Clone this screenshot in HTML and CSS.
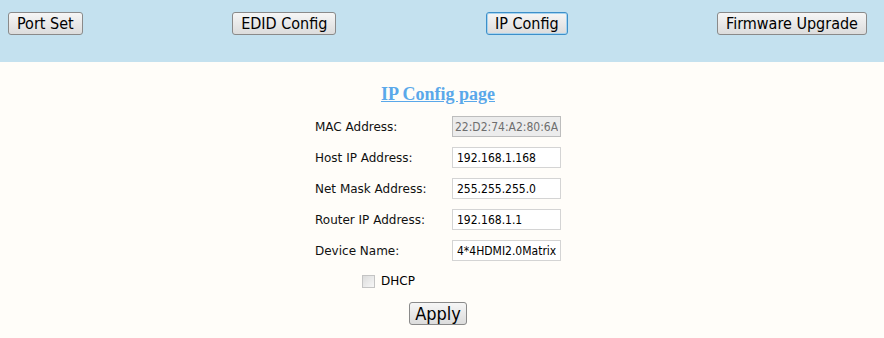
FILE: index.html
```html
<!DOCTYPE html>
<html lang="en">
<head>
    <meta charset="UTF-8">
    <meta name="viewport" content="width=device-width, initial-scale=1.0">
    <title>IP Config</title>
    <link rel="stylesheet" href="styles.css">
</head>
<body>
    <div class="top-bar">
        <button class="nav-button">Port Set</button>
        <button class="nav-button">EDID Config</button>
        <button class="nav-button active">IP Config</button>
        <button class="nav-button">Firmware Upgrade</button>
    </div>

    <div class="content">
        <h2 class="page-title"><a href="#">IP Config page</a></h2>
        <table class="config-table">
            <tr>
                <td class="label">MAC Address:</td>
                <td><input type="text" class="field" value="22:D2:74:A2:80:6A" disabled></td>
            </tr>
            <tr>
                <td class="label">Host IP Address:</td>
                <td><input type="text" class="field" value="192.168.1.168"></td>
            </tr>
            <tr>
                <td class="label">Net Mask Address:</td>
                <td><input type="text" class="field" value="255.255.255.0"></td>
            </tr>
            <tr>
                <td class="label">Router IP Address:</td>
                <td><input type="text" class="field" value="192.168.1.1"></td>
            </tr>
            <tr>
                <td class="label">Device Name:</td>
                <td><input type="text" class="field" value="4*4HDMI2.0Matrix"></td>
            </tr>
            <tr>
                <td class="dhcp-cell">
                    <label class="dhcp"><input type="checkbox" class="check"> DHCP</label>
                </td>
                <td></td>
            </tr>
            <tr>
                <td colspan="2" class="apply-cell">
                    <button class="apply-button">Apply</button>
                </td>
            </tr>
        </table>
    </div>
</body>
</html>
```

FILE: styles.css
```css
body {
    margin: 0;
    padding: 0;
    background-color: #fffdf9;
    font-family: "DejaVu Sans", Verdana, sans-serif;
}
.top-bar {
    display: flex;
    justify-content: space-between;
    align-items: flex-start;
    height: 62px;
    box-sizing: border-box;
    padding: 12px 17px 0 8px;
    background-color: #c4e1ef;
}
.nav-button,
.apply-button {
    font-family: "DejaVu Sans Condensed", "DejaVu Sans", Tahoma, sans-serif;
    font-stretch: condensed;
    font-size: 16px;
    height: 23px;
    padding: 0 8px;
    color: #000;
    background: linear-gradient(#f6f6f6, #dcdcdc);
    border: 1px solid #8a8a8a;
    border-radius: 3px;
    cursor: pointer;
}
.nav-button.active {
    border-color: #3d8fc9; /* focused one */
    box-shadow: inset 0 0 0 1px #a6d3ef;
}
.content {
    text-align: center;
    padding-right: 8px;
}
.page-title {
    margin: 0;
    padding-top: 21px;
    font-family: "Liberation Serif", "Times New Roman", serif;
    font-size: 18px;
    font-weight: bold;
    line-height: 22px;
}
.page-title a {
    color: #5aa8ea;
}
.config-table {
    margin: 6px auto 0;
    border-collapse: collapse;
    font-size: 12px;
}
.config-table td {
    padding: 5px 0;
    text-align: left;
}
.config-table .label {
    width: 137px;
    color: #111;
}
.field {
    width: 109px;
    height: 21px;
    box-sizing: border-box;
    padding: 0 4px;
    font-family: "DejaVu Sans Condensed", "DejaVu Sans", Tahoma, sans-serif;
    font-stretch: condensed;
    font-size: 12px;
    color: #000;
    background-color: #fff;
    border: 1px solid #d4d4d4;
}
.field:disabled {
    background-color: #ececec;
    color: #6e6e6e;
    border-color: #bdbdbd;
    padding: 0 2px;
}
.config-table .dhcp-cell {
    text-align: center;
    padding: 8px 0 5px;
}
.dhcp {
    display: inline-flex;
    align-items: center;
    gap: 6px;
    padding-left: 10px;
    font-size: 12px;
}
.check {
    appearance: none;
    width: 13px;
    height: 13px;
    margin: 0;
    border: 1px solid #c4c4c4;
    background: linear-gradient(135deg, #dcdcdc, #f7f7f7);
}
.config-table .apply-cell {
    text-align: center;
    padding-top: 6px;
}
.apply-button {
    font-size: 18px;
    padding: 0 5px;
}
```
